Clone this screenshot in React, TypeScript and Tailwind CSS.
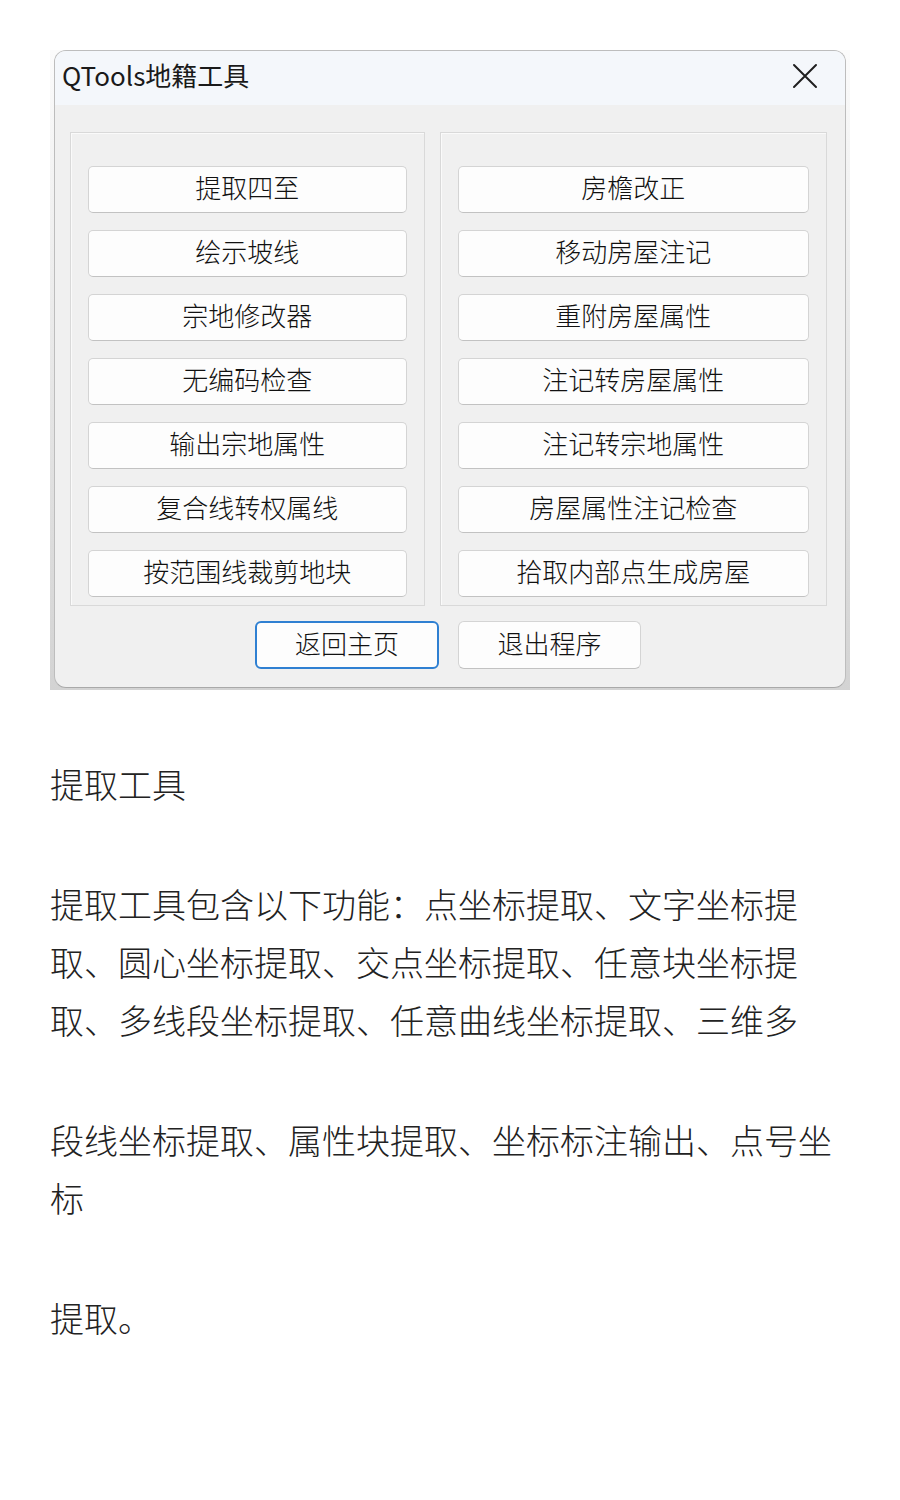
const leftTools = ['提取四至', '绘示坡线', '宗地修改器', '无编码检查', '输出宗地属性', '复合线转权属线', '按范围线裁剪地块']
const rightTools = ['房檐改正', '移动房屋注记', '重附房屋属性', '注记转房屋属性', '注记转宗地属性', '房屋属性注记检查', '拾取内部点生成房屋']

const cjk = { fontFamily: '"Noto Sans CJK SC", "Noto Sans", sans-serif' }

function ToolButton({ label }: { label: string }) {
  return (
    <div className="h-[47px] pb-[5px] flex items-center justify-center rounded-[5px] border border-[#d4d4d4] border-b-[#c2c2c2] bg-[#fdfdfd] text-[26px] font-light text-[#111111] leading-none">
      {label}
    </div>
  )
}

function Group({ items, width }: { items: string[]; width: string }) {
  return (
    <div className={`${width} border border-[#d9d9d9] shadow-[inset_1px_1px_0_#fafafa] pt-[33px] px-[17px] pb-[8px] flex flex-col gap-[17px]`}>
      {items.map((t) => (
        <ToolButton key={t} label={t} />
      ))}
    </div>
  )
}

function Dialog() {
  return (
    <div className="w-[800px] h-[640px] bg-gradient-to-b from-[#fbfbfb] to-[#d3d3d3] px-[4px] pb-[2px] flex">
      <div className="flex-1 flex flex-col rounded-[12px] border border-[#bdbdbd] border-b-[#a9a9a9] bg-[#f0f0f0] overflow-hidden">
        <div className="h-[54px] shrink-0 bg-[#f4f7fb] flex items-center justify-between pl-[7px] pr-[27px] pb-[7px]">
          <span className="text-[26px] text-[#1a1a1a] leading-none">QTools地籍工具</span>
          <svg width="26" height="26" viewBox="0 0 26 26" className="mt-[2px]">
            <path d="M2 2 L24 24 M24 2 L2 24" stroke="#1f1f1f" strokeWidth="2" strokeLinecap="round" />
          </svg>
        </div>
        <div className="pt-[27px] pl-[15px] pr-[18px]">
          <div className="flex gap-[15px]">
            <Group items={leftTools} width="w-[355px]" />
            <Group items={rightTools} width="w-[388px]" />
          </div>
          <div className="mt-[15px] flex pl-[185px] gap-[19px]">
            <div className="w-[184px] h-[48px] pb-[5px] flex items-center justify-center rounded-[6px] border-2 border-[#2f80d2] bg-[#fdfdfd] text-[26px] font-light text-[#111111] leading-none">
              返回主页
            </div>
            <div className="w-[183px] h-[48px] pb-[5px] flex items-center justify-center rounded-[6px] border border-[#d4d4d4] border-b-[#c2c2c2] bg-[#fdfdfd] text-[26px] font-light text-[#111111] leading-none">
              退出程序
            </div>
          </div>
        </div>
      </div>
    </div>
  )
}

export default function App() {
  return (
    <div className="w-[900px] min-h-[1500px] bg-white pt-[50px] px-[50px]" style={cjk}>
      <Dialog />
      <div className="w-[800px] mt-[65px] text-[34px] leading-[58px] font-light text-[#222222] flex flex-col gap-[62px]">
        <p>提取工具</p>
        <p>提取工具包含以下功能：点坐标提取、文字坐标提取、圆心坐标提取、交点坐标提取、任意块坐标提取、多线段坐标提取、任意曲线坐标提取、三维多</p>
        <p>段线坐标提取、属性块提取、坐标标注输出、点号坐标</p>
        <p>提取。</p>
      </div>
    </div>
  )
}
